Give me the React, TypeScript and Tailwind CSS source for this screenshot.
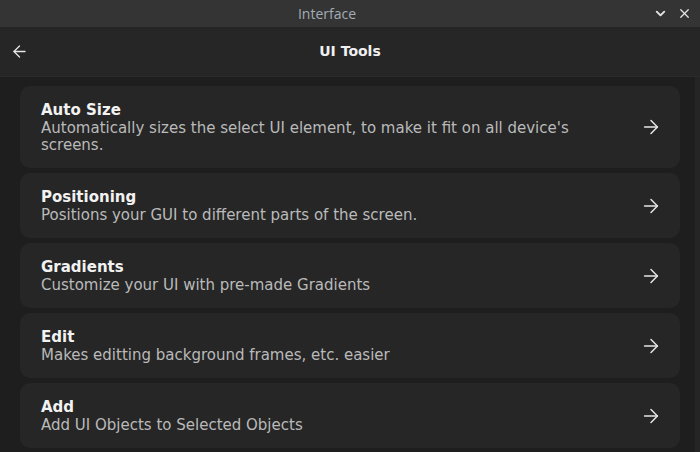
import React from 'react';
import { ArrowLeft, ArrowRight, ChevronDown, X } from 'lucide-react';

const TOOLS = [
  { title: 'Auto Size', desc: "Automatically sizes the select UI element, to make it fit on all device's screens." },
  { title: 'Positioning', desc: 'Positions your GUI to different parts of the screen.' },
  { title: 'Gradients', desc: 'Customize your UI with pre-made Gradients' },
  { title: 'Edit', desc: 'Makes editting background frames, etc. easier' },
  { title: 'Add', desc: 'Add UI Objects to Selected Objects' },
];

export default function App() {
  return (
    <div className="flex h-[452px] w-[700px] flex-col overflow-hidden bg-[#1e1e1e] font-['DejaVu_Sans',sans-serif]">
      {/* Window title bar */}
      <div className="relative flex h-[27px] shrink-0 items-center justify-center bg-[#343434]">
        <span className="pr-[46px] font-['Open_Sans',sans-serif] text-[14px] text-[#a3acb5]">Interface</span>
        <div className="absolute right-[8px] top-0 flex h-full items-center gap-[9px] text-[#e6e6e6]">
          <ChevronDown className="h-[15px] w-[15px]" strokeWidth={3} />
          <X className="h-[15px] w-[15px]" strokeWidth={2} />
        </div>
      </div>

      {/* Header */}
      <div className="relative flex h-[50px] shrink-0 items-center justify-center border-b border-[#2b2b2b] bg-[#262626]">
        <ArrowLeft className="absolute left-[10px] h-[19px] w-[19px] text-[#e6e6e6]" strokeWidth={1.6} />
        <h1 className="text-[14px] font-bold text-[#f0f0f0]">UI Tools</h1>
      </div>

      {/* Tool list */}
      <div className="flex min-h-0 flex-1">
        <div className="flex flex-1 flex-col gap-[5px] pl-[20px] pr-[15px] pt-[9px]">
          {TOOLS.map(t => (
            <div key={t.title} className="flex items-center rounded-[10px] bg-[#262626] pb-[14px] pl-[21px] pr-[18px] pt-[14px]">
              <div className="flex-1 pr-[38px]">
                <div className="text-[15px] font-bold leading-[20px] text-[#f2f2f2]">{t.title}</div>
                <div className="text-[15px] leading-[17px] text-[#bababa]">{t.desc}</div>
              </div>
              <ArrowRight className="h-[22px] w-[22px] text-[#e6e6e6]" strokeWidth={1.6} />
            </div>
          ))}
        </div>
        <div className="w-[5px] bg-[#252525]" />
      </div>
    </div>
  );
}
